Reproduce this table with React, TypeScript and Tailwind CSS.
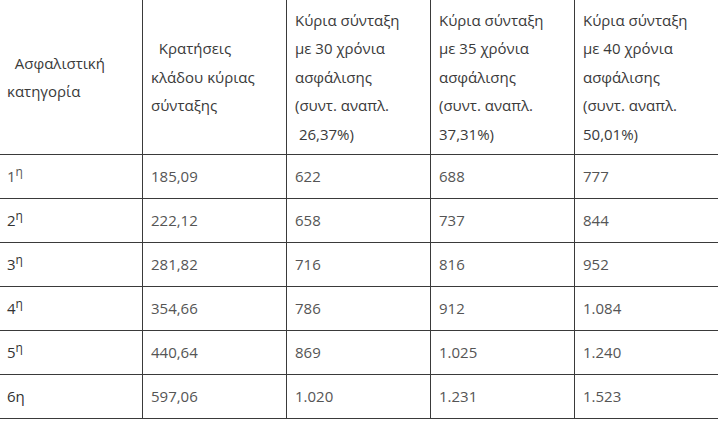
import React from "react";

const sup = "text-[12px]";

const headers: React.ReactNode[] = [
  <>{"\u00a0\u00a0"}Ασφαλιστική<br />κατηγορία</>,
  <>{"\u00a0\u00a0"}Κρατήσεις<br />κλάδου κύριας<br />σύνταξης</>,
  <>Κύρια σύνταξη<br />με 30 χρόνια<br />ασφάλισης<br />(συντ. αναπλ.<br />{"\u00a0"}26,37%)</>,
  <>Κύρια σύνταξη<br />με 35 χρόνια<br />ασφάλισης<br />(συντ. αναπλ.<br />37,31%)</>,
  <>Κύρια σύνταξη<br />με 40 χρόνια<br />ασφάλισης<br />(συντ. αναπλ.<br />50,01%)</>,
];

const rows: [React.ReactNode, string, string, string, string][] = [
  [<span className="text-[#555]">1<sup className={sup}>η</sup></span>, "185,09", "622", "688", "777"],
  [<span>2<sup className={sup}>η</sup></span>, "222,12", "658", "737", "844"],
  [<span>3<sup className={sup}>η</sup></span>, "281,82", "716", "816", "952"],
  [<span>4<sup className={sup}>η</sup></span>, "354,66", "786", "912", "1.084"],
  [<span>5<sup className={sup}>η</sup></span>, "440,64", "869", "1.025", "1.240"],
  [<span>6η</span>, "597,06", "1.020", "1.231", "1.523"],
];

export default function App() {
  return (
    <div
      className="w-[718px] h-[421px] overflow-hidden bg-white"
      style={{ fontFamily: '"Open Sans", "Noto Sans", sans-serif' }}
    >
      <table className="table-fixed border-collapse -ml-[2px] -mt-[1px] w-[722px] text-[15px] leading-[28.4px]">
        <colgroup>
          <col className="w-[144px]" />
          <col className="w-[144px]" />
          <col className="w-[144px]" />
          <col className="w-[144px]" />
          <col className="w-[146px]" />
        </colgroup>
        <thead>
          <tr>
            {headers.map((h, i) => (
              <th
                key={i}
                className="border border-[#3a3a3a] px-[8px] py-[6px] text-left align-middle font-normal text-[#3a3a3a]"
              >
                {h}
              </th>
            ))}
          </tr>
        </thead>
        <tbody>
          {rows.map((r, i) => (
            <tr key={i}>
              <td className="border border-[#3a3a3a] px-[8px] py-[7.3px] align-middle font-medium text-[#333]">
                {r[0]}
              </td>
              {r.slice(1).map((c, j) => (
                <td
                  key={j}
                  className="border border-[#3a3a3a] px-[8px] py-[7.3px] align-middle text-[#555]"
                >
                  {c as string}
                </td>
              ))}
            </tr>
          ))}
        </tbody>
      </table>
    </div>
  );
}
